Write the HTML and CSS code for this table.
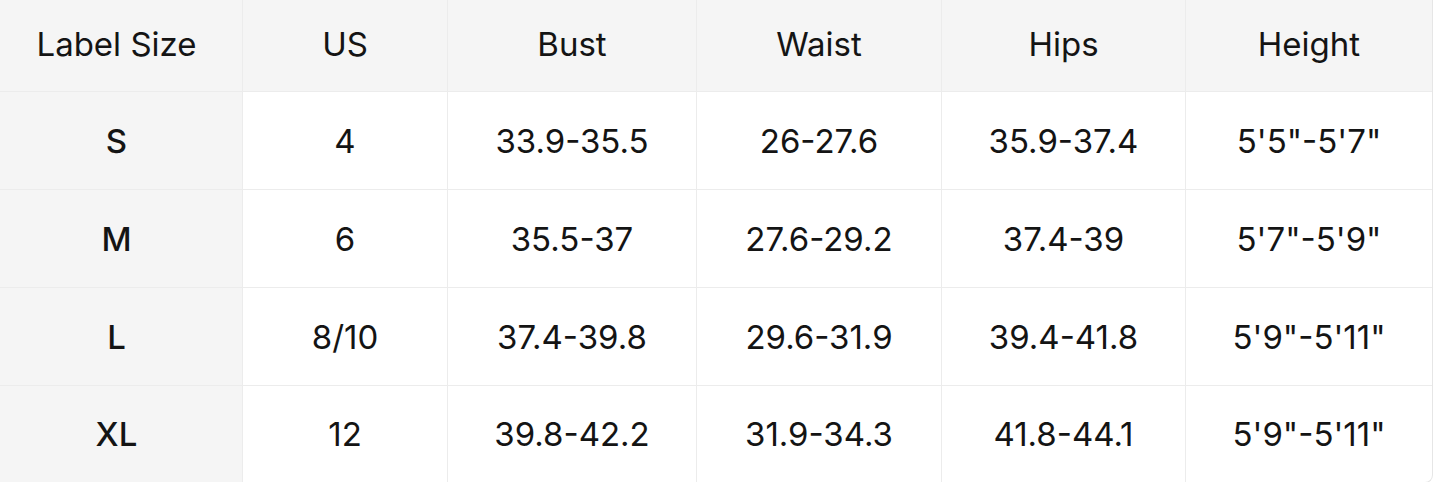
FILE: index.html
```html
<!DOCTYPE html>
<html>
<head>
<meta charset="utf-8">
<link rel="stylesheet" href="styles.css">
</head>
<body>
<div class="table">
  <div class="row head">
    <div class="cell first">Label Size</div>
    <div class="cell">US</div>
    <div class="cell">Bust</div>
    <div class="cell">Waist</div>
    <div class="cell">Hips</div>
    <div class="cell">Height</div>
  </div>
  <div class="row">
    <div class="cell first">S</div>
    <div class="cell">4</div>
    <div class="cell">33.9-35.5</div>
    <div class="cell">26-27.6</div>
    <div class="cell">35.9-37.4</div>
    <div class="cell">5'5"-5'7"</div>
  </div>
  <div class="row">
    <div class="cell first">M</div>
    <div class="cell">6</div>
    <div class="cell">35.5-37</div>
    <div class="cell">27.6-29.2</div>
    <div class="cell">37.4-39</div>
    <div class="cell">5'7"-5'9"</div>
  </div>
  <div class="row">
    <div class="cell first">L</div>
    <div class="cell">8/10</div>
    <div class="cell">37.4-39.8</div>
    <div class="cell">29.6-31.9</div>
    <div class="cell">39.4-41.8</div>
    <div class="cell">5'9"-5'11"</div>
  </div>
  <div class="row last">
    <div class="cell first">XL</div>
    <div class="cell">12</div>
    <div class="cell">39.8-42.2</div>
    <div class="cell">31.9-34.3</div>
    <div class="cell">41.8-44.1</div>
    <div class="cell">5'9"-5'11"</div>
  </div>
</div>
</body>
</html>
```
FILE: styles.css
```css
html, body {
  margin: 0;
  padding: 0;
  background: #ffffff;
}
body {
  font-family: "Inter", "Liberation Sans", sans-serif;
  color: #141414;
  overflow: hidden;
  height: 482px;
}
.table {
  width: 1432px;
  border-right: 1px solid #e6e6e6;
  border-bottom: 1px solid #e6e6e6;
  border-bottom-right-radius: 8px;
  overflow: hidden;
}
.row {
  display: grid;
  grid-template-columns: 243px 205px 249px 245px 244px 1fr;
  height: 97px;
  border-bottom: 1px solid #ececec;
}
.row.head {
  height: 91px;
  background: #f5f5f5;
}
.row.last {
  border-bottom: none;
  height: 96px;
}
.cell {
  display: flex;
  align-items: center;
  justify-content: center;
  font-size: 33px;
  font-weight: 400;
  border-right: 1px solid #ececec;
}
.cell:last-child {
  border-right: none;
}
.head .cell {
  font-weight: 400;
  padding-bottom: 3px;
}
.cell.first {
  background: #f5f5f5;
  font-weight: 500;
  padding-right: 9px;
}
.head .cell.first {
  font-weight: 400;
}
```
